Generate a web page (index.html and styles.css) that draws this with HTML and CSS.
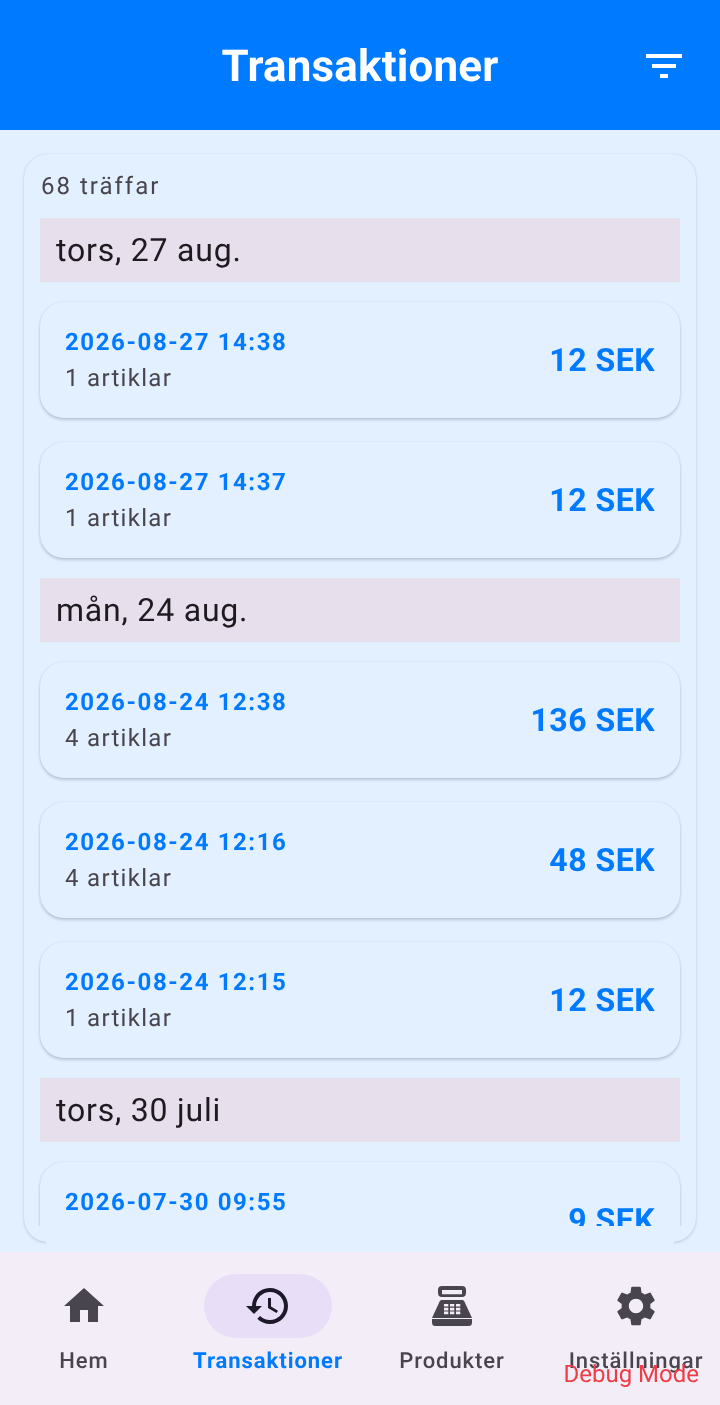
FILE: index.html
```html
<!DOCTYPE html>
<html lang="sv">
<head>
<meta charset="utf-8">
<title>Transaktioner</title>
<link rel="stylesheet" href="styles.css">
</head>
<body>
<div class="app">
  <header class="topbar">
    <h1 class="title">Transaktioner</h1>
    <svg class="filter" viewBox="0 0 24 24"><path d="M10 18h4v-2h-4v2zM3 6v2h18V6H3zm3 7h12v-2H6v2z"/></svg>
  </header>
  <main class="content">
    <section class="panel">
      <p class="count">68 träffar</p>
      <div class="list">
        <h2 class="day">tors, 27 aug.</h2>
        <article class="tx"><div class="tx-info"><div class="tx-date">2026-08-27 14:38</div><div class="tx-items">1 artiklar</div></div><div class="tx-sum">12 SEK</div></article>
        <article class="tx"><div class="tx-info"><div class="tx-date">2026-08-27 14:37</div><div class="tx-items">1 artiklar</div></div><div class="tx-sum">12 SEK</div></article>
        <h2 class="day">mån, 24 aug.</h2>
        <article class="tx"><div class="tx-info"><div class="tx-date">2026-08-24 12:38</div><div class="tx-items">4 artiklar</div></div><div class="tx-sum">136 SEK</div></article>
        <article class="tx"><div class="tx-info"><div class="tx-date">2026-08-24 12:16</div><div class="tx-items">4 artiklar</div></div><div class="tx-sum">48 SEK</div></article>
        <article class="tx"><div class="tx-info"><div class="tx-date">2026-08-24 12:15</div><div class="tx-items">1 artiklar</div></div><div class="tx-sum">12 SEK</div></article>
        <h2 class="day">tors, 30 juli</h2>
        <article class="tx"><div class="tx-info"><div class="tx-date">2026-07-30 09:55</div><div class="tx-items">1 artiklar</div></div><div class="tx-sum">9 SEK</div></article>
      </div>
    </section>
  </main>
  <nav class="nav">
    <div class="nav-item">
      <span class="nav-icon"><svg viewBox="0 0 24 24"><path d="M10 20v-6h4v6h5v-8h3L12 3 2 12h3v8z"/></svg></span>
      <span class="nav-label">Hem</span>
    </div>
    <div class="nav-item active">
      <span class="nav-icon"><svg viewBox="0 0 24 24"><path d="M13 3c-4.97 0-9 4.03-9 9H1l3.89 3.89.07.14L9 12H6c0-3.87 3.13-7 7-7s7 3.13 7 7-3.13 7-7 7c-1.93 0-3.68-.79-4.94-2.06l-1.42 1.42C8.27 19.99 10.51 21 13 21c4.97 0 9-4.03 9-9s-4.03-9-9-9zm-1 5v5l4.28 2.54.72-1.21-3.5-2.08V8H12z"/></svg></span>
      <span class="nav-label">Transaktioner</span>
    </div>
    <div class="nav-item">
      <span class="nav-icon"><svg viewBox="0 0 48 48"><path fill-rule="evenodd" d="M14 4h20a4 4 0 0 1 4 4v3a4 4 0 0 1-4 4H14a4 4 0 0 1-4-4V8a4 4 0 0 1 4-4zm0 4v4.300h20V8zM14 18h20c1 0 2 .6 2.500 1.700L44 36H4l7.500-16.300C12 18.600 13 18 14 18zm2 4v2.600h4.300V22zm6 0v2.600h4.300V22zm6 0v2.600h4.300V22zm-12 3.800v2.600h4.300v-2.600zm6 0v2.600h4.300v-2.600zm6 0v2.600h4.300v-2.600zm-12 3.800v2.600h4.300v-2.600zm6 0v2.600h4.300v-2.600zm6 0v2.600h4.300v-2.600zM4 37h40v3.500a3.500 3.500 0 0 1-3.500 3.500h-33A3.500 3.500 0 0 1 4 40.500z"/></svg></span>
      <span class="nav-label">Produkter</span>
    </div>
    <div class="nav-item">
      <span class="nav-icon"><svg viewBox="0 0 24 24"><path d="M19.14 12.94c.04-.3.06-.61.06-.94 0-.32-.02-.64-.07-.94l2.030-1.580c.18-.14.23-.41.12-.61l-1.920-3.320c-.12-.22-.37-.29-.59-.22l-2.390.96c-.5-.38-1.030-.7-1.620-.94l-.36-2.540c-.04-.24-.24-.41-.48-.41h-3.840c-.24 0-.43.17-.47.41l-.36 2.540c-.59.24-1.130.57-1.620.94l-2.390-.96c-.22-.08-.47 0-.59.22L2.740 8.870c-.12.21-.08.47.12.61l2.030 1.580c-.05.3-.09.63-.09.94s.02.64.07.94l-2.030 1.580c-.18.14-.23.41-.12.61l1.920 3.320c.12.22.37.29.59.22l2.390-.96c.5.38 1.030.7 1.620.94l.36 2.540c.05.24.24.41.48.41h3.840c.24 0 .44-.17.47-.41l.36-2.540c.59-.24 1.130-.56 1.620-.94l2.390.96c.22.08.47 0 .59-.22l1.920-3.320c.12-.22.07-.47-.12-.61l-2.010-1.580zM12 15.600c-1.980 0-3.600-1.620-3.600-3.600s1.620-3.600 3.600-3.600 3.600 1.620 3.600 3.600-1.620 3.600-3.600 3.600z"/></svg></span>
      <span class="nav-label">Inställningar</span>
    </div>
    <span class="debug">Debug Mode</span>
  </nav>
</div>
</body>
</html>
```
FILE: styles.css
```css
* { box-sizing: border-box; }
html, body { margin: 0; padding: 0; height: 100%; }
body { font-family: Roboto, "Liberation Sans", sans-serif; background: #e3f0ff; overflow: hidden; text-rendering: geometricPrecision; }
.app { display: flex; flex-direction: column; height: 1405px; will-change: transform; }

.topbar { position: relative; flex: none; height: 130px; background: #007aff; display: flex; align-items: center; justify-content: center; padding-top: 2px; }
.title { margin: 0; color: #fff; font-size: 44px; font-weight: 700; line-height: 52px; letter-spacing: .15px; }
.filter { position: absolute; top: 42px; right: 32px; width: 48px; height: 48px; fill: #fff; }

.content { flex: 1; min-height: 0; padding: 24px 24px 10px; display: flex; }
.panel { position: relative; flex: 1; min-width: 0; display: flex; flex-direction: column; padding: 16px 16px 16px; border-radius: 24px; background: #e3f0ff; box-shadow: 0 1px 3px rgba(40,60,90,.2), 0 0 1px rgba(40,60,90,.12); }
.panel::after { content: ""; position: absolute; left: 22px; right: 22px; bottom: -5px; height: 21px; background: #e3f0ff; }
.count { margin: 0 0 16px 1px; height: 32px; line-height: 32px; font-size: 24px; font-weight: 400; letter-spacing: 2px; color: #49454f; flex: none; }
.list { flex: 1; min-height: 0; overflow: hidden; display: flex; flex-direction: column; margin: 0 -8px; padding: 0 8px; }

.day { flex: none; margin: 0 0 20px; height: 64px; padding: 0 16px; background: #e7dfec; color: #1d1b20; font-size: 32px; font-weight: 400; line-height: 64px; letter-spacing: .8px; }
.tx { flex: none; height: 116px; margin-bottom: 24px; padding: 2px 25px 0; border-radius: 24px; background: #e3f0ff; box-shadow: 0 2px 3px rgba(40,60,90,.22), 0 0 2px rgba(40,60,90,.12); display: flex; align-items: center; justify-content: space-between; }
.tx + .day { margin-top: -4px; }
.tx-date { font-size: 24px; font-weight: 700; line-height: 32px; letter-spacing: 1.6px; color: #007aff; }
.tx-items { font-size: 24px; line-height: 36px; letter-spacing: 1.3px; color: #49454f; margin-top: 2px; }
.tx-sum { font-size: 32px; font-weight: 700; line-height: 40px; letter-spacing: .5px; color: #007aff; margin-top: -2px; }

.nav { position: relative; flex: none; height: 153px; background: #f3edf7; padding: 22px 20px 0; display: flex; justify-content: space-between; }
.nav-item { width: 128px; display: flex; flex-direction: column; align-items: center; }
.nav-icon { width: 128px; height: 64px; border-radius: 32px; display: flex; align-items: center; justify-content: center; margin-bottom: 8px; }
.nav-icon svg { width: 48px; height: 48px; fill: #49454f; }
.nav-label { font-size: 22px; font-weight: 500; line-height: 32px; letter-spacing: .95px; color: #49454f; white-space: nowrap; }
.active .nav-icon { background: #e8def8; }
.active .nav-icon svg { fill: #1d192b; }
.active .nav-label { color: #007aff; font-weight: 700; }
.debug { position: absolute; right: 21px; top: 106px; font-size: 24px; line-height: 32px; color: #ee3d47; }
```
